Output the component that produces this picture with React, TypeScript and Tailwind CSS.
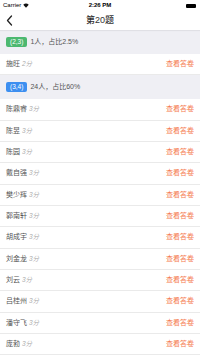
import React from 'react';

type Row = { name: string; score: string };

const sections: { range: string; color: string; summary: string; rows: Row[] }[] = [
  {
    range: '(2,3)',
    color: 'bg-[#4cb870]',
    summary: '1人，占比2.5%',
    rows: [{ name: '施旺', score: '2分' }],
  },
  {
    range: '(3,4)',
    color: 'bg-[#3d8ff0]',
    summary: '24人，占比60%',
    rows: ['陈鼎睿', '陈昱', '陈园', '戴自强', '樊少辉', '郭南轩', '胡成宇', '刘金龙', '刘云', '吕桂州', '潘守飞', '庞勃'].map(
      (name) => ({ name, score: '3分' })
    ),
  },
];

function StatusBar() {
  return (
    <div className="h-[11px] flex items-center justify-between px-[3px] text-[6px] text-black bg-white relative">
      <div className="flex items-center gap-[2px]">
        <span>Carrier</span>
        <svg width="6" height="5" viewBox="0 0 12 9">
          <path d="M6 9 L0.5 3 A8 8 0 0 1 11.5 3 Z" fill="#111" />
        </svg>
      </div>
      <span className="absolute left-0 right-0 text-center font-bold">2:26 PM</span>
      <div className="w-[10px] h-[4px] bg-black rounded-[1px] mr-[1px]" />
    </div>
  );
}

function NavBar() {
  return (
    <div className="h-[19px] flex items-center relative bg-white shadow-[0_1px_1px_rgba(0,0,0,0.06)] z-10">
      <svg className="absolute left-[6px]" width="7" height="11" viewBox="0 0 7 11">
        <path d="M5.5 1 L1.5 5.5 L5.5 10" fill="none" stroke="#222" strokeWidth="1.3" strokeLinecap="round" strokeLinejoin="round" />
      </svg>
      <span className="w-full text-center text-[9px] font-medium text-[#333]">第20题</span>
    </div>
  );
}

export default function App() {
  return (
    <div
      className="w-[200px] h-[355px] overflow-hidden bg-white"
      style={{ fontFamily: '"Liberation Sans", "Noto Sans CJK SC", sans-serif' }}
    >
      <StatusBar />
      <NavBar />
      {sections.map((s) => (
        <div key={s.range}>
          <div className="h-[24px] bg-[#efeff4] flex items-center px-[6px] gap-[3px]">
            <span className={`${s.color} text-white text-[6.5px] h-[10px] px-[4px] rounded-[2px] flex items-center`}>
              {s.range}
            </span>
            <span className="text-[7px] text-[#555]">{s.summary}</span>
          </div>
          {s.rows.map((r) => (
            <div
              key={r.name}
              className="h-[21.33px] flex items-center justify-between px-[6px] border-b border-[#eaeaea] bg-white"
            >
              <div className="flex items-baseline gap-[2px]">
                <span className="text-[7px] text-[#555]">{r.name}</span>
                <span className="text-[6.5px] text-[#aaa] italic">{r.score}</span>
              </div>
              <span className="text-[7px] text-[#f5784c]">查看答卷</span>
            </div>
          ))}
        </div>
      ))}
    </div>
  );
}
